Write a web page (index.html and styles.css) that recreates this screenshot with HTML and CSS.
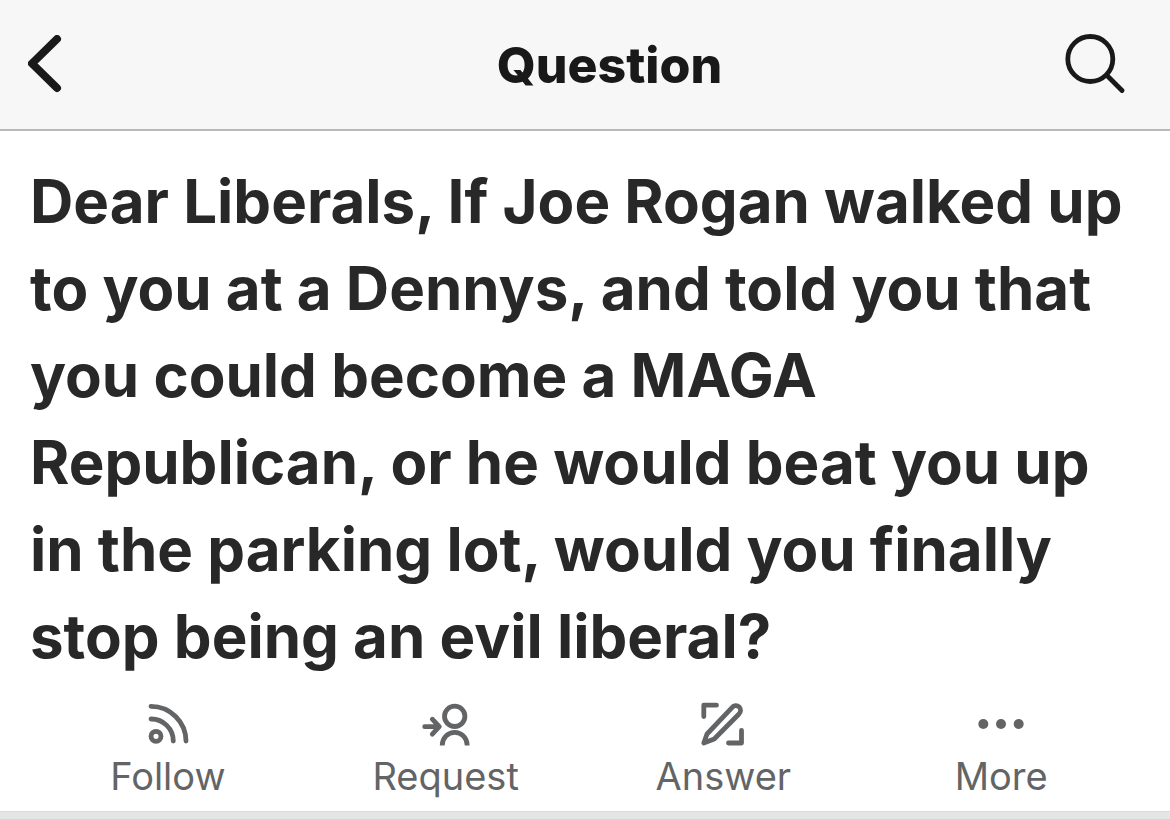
FILE: index.html
```html
<!DOCTYPE html>
<html lang="en">
<head>
    <meta charset="UTF-8">
    <meta name="viewport" content="width=device-width, initial-scale=1.0">
    <title>Question</title>
    <link rel="stylesheet" href="styles.css">
</head>
<body>
    <header class="top-bar">
        <button type="button" class="icon-button back" aria-label="Back">
            <svg width="34" height="58" viewBox="0 0 34 58" stroke-width="8">
                <path d="M29 4 L4 28.5 L29 53"/>
            </svg>
        </button>
        <div class="top-title">Question</div>
        <button type="button" class="icon-button search" aria-label="Search">
            <svg width="60" height="60" viewBox="0 0 60 60" stroke-width="4.8">
                <circle cx="25.3" cy="25" r="22.5"/>
                <path d="M42 41.5 L57 56.5"/>
            </svg>
        </button>
    </header>

    <main>
        <h1 class="question">Dear Liberals, If Joe Rogan walked up to you at a Dennys, and told you that you could become a MAGA Republican, or he would beat you up in the parking lot, would you finally stop being an evil liberal?</h1>

        <div class="actions">
            <button type="button" class="action">
                <svg width="44" height="44" viewBox="0 0 44 44">
                    <circle cx="10" cy="34.3" r="5"/>
                    <path d="M5 17 A22 22 0 0 1 27.3 39"/>
                    <path d="M5 4.3 A35 35 0 0 1 40 39"/>
                </svg>
                <span>Follow</span>
            </button>
            <button type="button" class="action">
                <svg width="48" height="44" viewBox="0 0 48 44">
                    <circle cx="32.7" cy="14.3" r="10.2"/>
                    <path stroke-linecap="butt" d="M20.2 43.4 A12.5 13 0 0 1 45.2 43.4"/>
                    <path d="M2.7 24.7 H17 M10.3 17.2 L17.3 24.7 L10.3 32.2"/>
                </svg>
                <span>Request</span>
            </button>
            <button type="button" class="action">
                <svg width="44" height="44" viewBox="0 0 44 44">
                    <path d="M15.5 3.2 H2.8 V14.5"/>
                    <path d="M27.5 41 H40.5 V28.5"/>
                    <path d="M2.8 41 L6 32 L31 5.6 C33 3.2 36 3 38 4.8 C40.2 6.8 40 9.8 38 12 L13.2 37 Z"/>
                </svg>
                <span>Answer</span>
            </button>
            <button type="button" class="action">
                <svg class="dots" width="46" height="44" viewBox="0 0 46 44">
                    <circle cx="5.3" cy="22" r="5"/>
                    <circle cx="23" cy="22" r="5"/>
                    <circle cx="40.7" cy="22" r="5"/>
                </svg>
                <span>More</span>
            </button>
        </div>
    </main>
</body>
</html>
```
FILE: styles.css
```css
body {
    font-family: Inter, "Liberation Sans", sans-serif;
    background-color: #e4e5e7;
    color: #282829;
    margin: 0;
}
button {
    background: none;
    border: none;
    padding: 0;
    font-family: inherit;
    cursor: pointer;
}
svg {
    display: block;
    fill: none;
    stroke: currentColor;
    stroke-linecap: round;
    stroke-linejoin: round;
}
.top-bar {
    display: flex;
    align-items: center;
    height: 129px;
    padding: 0 45px 0 28px;
    background-color: #f7f7f7;
    border-bottom: 2px solid #b9b9b9;
    color: #191919;
}
.icon-button {
    padding-bottom: 2px;
    color: #191919;
}
.back {
    width: 126px;
}
.top-title {
    flex: 1;
    text-align: center;
    font-size: 50px;
    font-weight: 800;
}
main {
    background-color: #fff;
    border-bottom: 1px solid #d9dadc;
}
.question {
    margin: 0;
    padding: 27px 30px 0;
    font-size: 60px;
    line-height: 87px;
    font-weight: 700;
}
.actions {
    display: grid;
    grid-template-columns: repeat(4, 1fr);
    padding: 22px 30px 12px 29px;
}
.action {
    display: flex;
    flex-direction: column;
    align-items: center;
    gap: 7px;
    color: #636466;
    font-size: 38px;
    line-height: 46px;
}
.action svg {
    stroke-width: 4.8;
}
.action .dots {
    fill: currentColor;
    stroke: none;
}
```
